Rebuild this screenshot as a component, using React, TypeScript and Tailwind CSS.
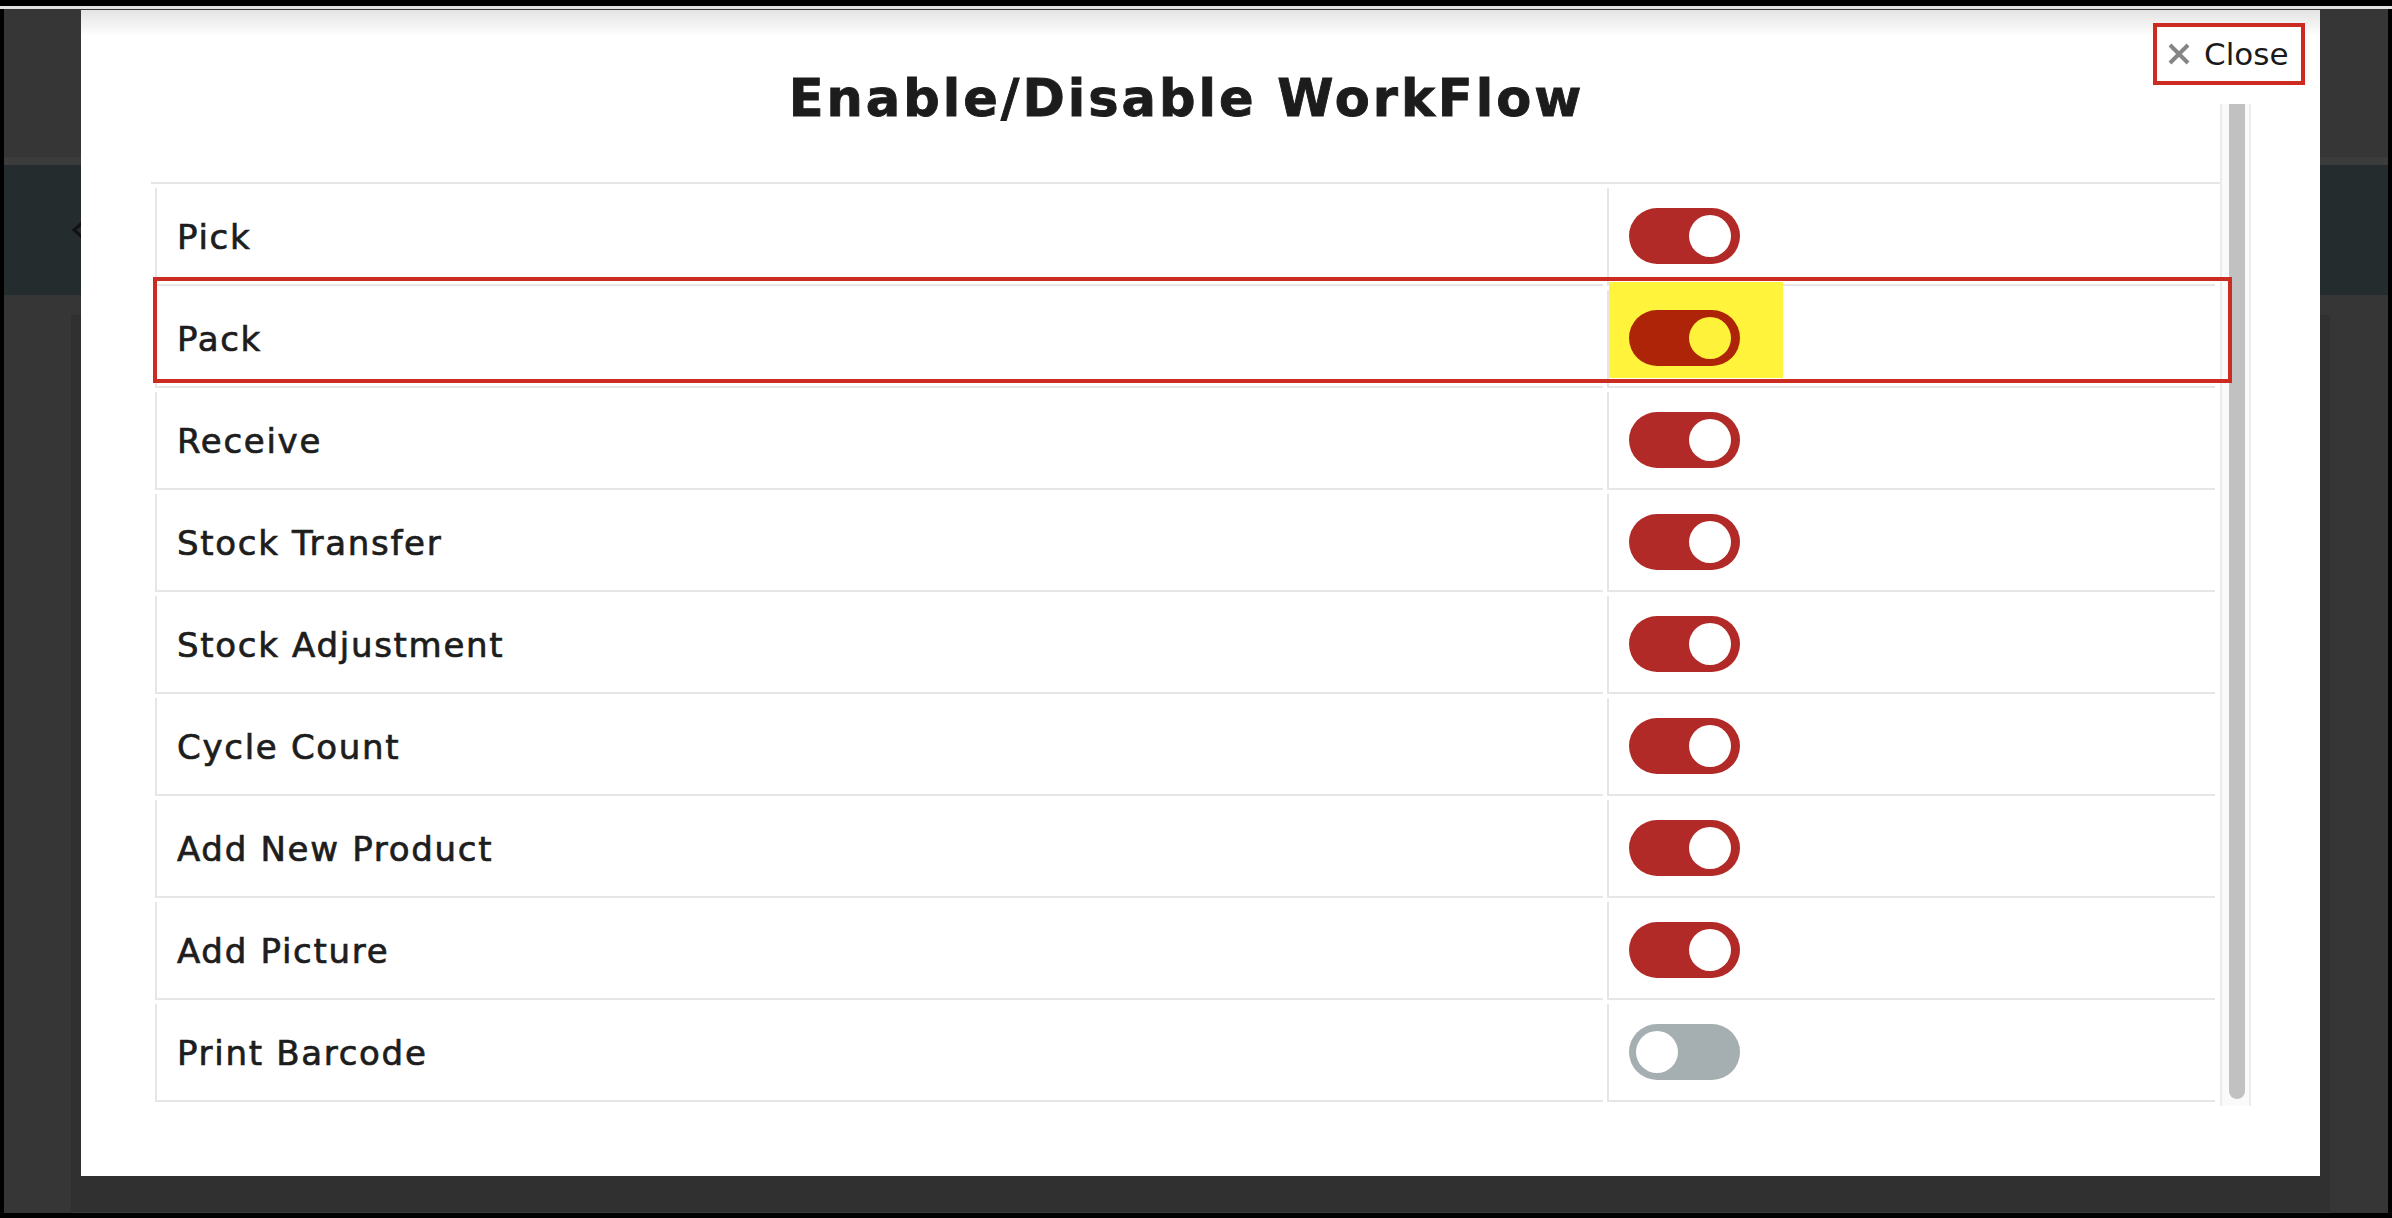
import React from "react";

type Item = { label: string; on: boolean; marked?: boolean };

const items: Item[] = [
  { label: "Pick", on: true },
  { label: "Pack", on: true, marked: true },
  { label: "Receive", on: true },
  { label: "Stock Transfer", on: true },
  { label: "Stock Adjustment", on: true },
  { label: "Cycle Count", on: true },
  { label: "Add New Product", on: true },
  { label: "Add Picture", on: true },
  { label: "Print Barcode", on: false },
];

function Toggle({ on, marked }: { on: boolean; marked?: boolean }) {
  if (!on) {
    return (
      <div className="relative z-10 w-[111px] h-[56px] rounded-full bg-[#a5aeb0] flex items-center pl-[7px]">
        <div className="w-[42px] h-[42px] rounded-full bg-white" />
      </div>
    );
  }
  return (
    <div
      className={
        marked
          ? "relative z-10 w-[111px] h-[56px] rounded-full bg-[#ae2408] flex items-center justify-end pr-[9px]"
          : "relative z-10 w-[111px] h-[56px] rounded-full bg-[#b12a27] flex items-center justify-end pr-[9px]"
      }
    >
      <div className={marked ? "w-[42px] h-[42px] rounded-full bg-[#fff23b]" : "w-[42px] h-[42px] rounded-full bg-white"} />
    </div>
  );
}

function Row({ item }: { item: Item }) {
  return (
    <div className="relative grid grid-cols-[1448px_608px] gap-[4px] h-[98px]">
      <div className="border-l-2 border-b-2 border-[#e6e6e6] flex items-center pl-[20px] pt-[3px] text-[34px] tracking-[1.7px] text-[#1d1d1d] [-webkit-text-stroke:0.7px_#1d1d1d]">
        {item.label}
      </div>
      <div className="relative border-l-2 border-b-2 border-[#e6e6e6] flex items-center pl-[20px]">
        {item.marked && <div className="absolute left-0 top-[-8px] w-[174px] h-[96px] bg-[#fff33b]" />}
        <Toggle on={item.on} marked={item.marked} />
      </div>
      {item.marked && (
        <div className="absolute left-[-2px] top-[-13px] w-[2079px] h-[106px] border-4 border-[#cc2b22] z-20 pointer-events-none" />
      )}
    </div>
  );
}

export default function App() {
  return (
    <div className="w-[2392px] h-[1218px] bg-black pt-[6px] pb-[5px] flex flex-col font-['DejaVu_Sans',sans-serif]">
      <div className="h-[3px] bg-[#e2e2e2]" />

      {/* page behind the overlay */}
      <div className="relative flex-1 mx-[4px] bg-[#363636] flex flex-col">
        <div className="h-[148px]" />
        <div className="h-[8px] bg-[#3c3c3c]" />
        <div className="h-[130px] bg-[#252c2e] flex items-center pl-[66px]">
          <svg width="16" height="18" viewBox="0 0 16 18">
            <path d="M12 2 L4 9 L12 16" fill="none" stroke="#111" strokeWidth="3" />
          </svg>
        </div>
        <div className="flex-1 pt-[20px] pl-[67px] pr-[58px] flex flex-col">
          <div className="flex-1 bg-[#303030] border-b border-[#3d3d3d]" />
        </div>

        {/* modal */}
        <div className="absolute left-[77px] top-[1px] w-[2239px] bottom-[37px] bg-[linear-gradient(to_bottom,#e3e3e3,#ffffff_26px)] flex pl-[70px]">
          <div className="w-[2069px] pt-[63px] flex flex-col">
            <h1 className="h-[52px] leading-none text-center text-[51px] font-bold tracking-[3px] text-[#1c1c1c] pl-[2px] [-webkit-text-stroke:0.9px_#1c1c1c]">
              Enable/Disable WorkFlow
            </h1>
            <div className="mt-[57px] border-t-2 border-[#e6e6e6] pt-[4px] px-[4px] flex flex-col gap-[4px]">
              {items.map((it) => (
                <Row key={it.label} item={it} />
              ))}
            </div>
          </div>

          {/* scrollbar */}
          <div className="mt-[94px] h-[1002px] w-[31px] border-x-2 border-[#ececec] bg-[#fafafa] flex justify-center pl-[3px]">
            <div className="w-[16px] h-[995px] rounded-b-full bg-[#c1c1c1]" />
          </div>

          <button className="absolute top-[13px] right-[15px] h-[62px] w-[152px] border-4 border-[#cc2b22] flex items-center pl-[10px] gap-[13px] bg-white">
            <svg width="24" height="22" viewBox="0 0 24 22" className="blur-[0.6px]">
              <path d="M3 2 L21 20 M21 2 L3 20" stroke="#858585" strokeWidth="4" />
            </svg>
            <span className="text-[31px] leading-none text-[#1a1a1a]">Close</span>
          </button>
        </div>
      </div>
    </div>
  );
}
